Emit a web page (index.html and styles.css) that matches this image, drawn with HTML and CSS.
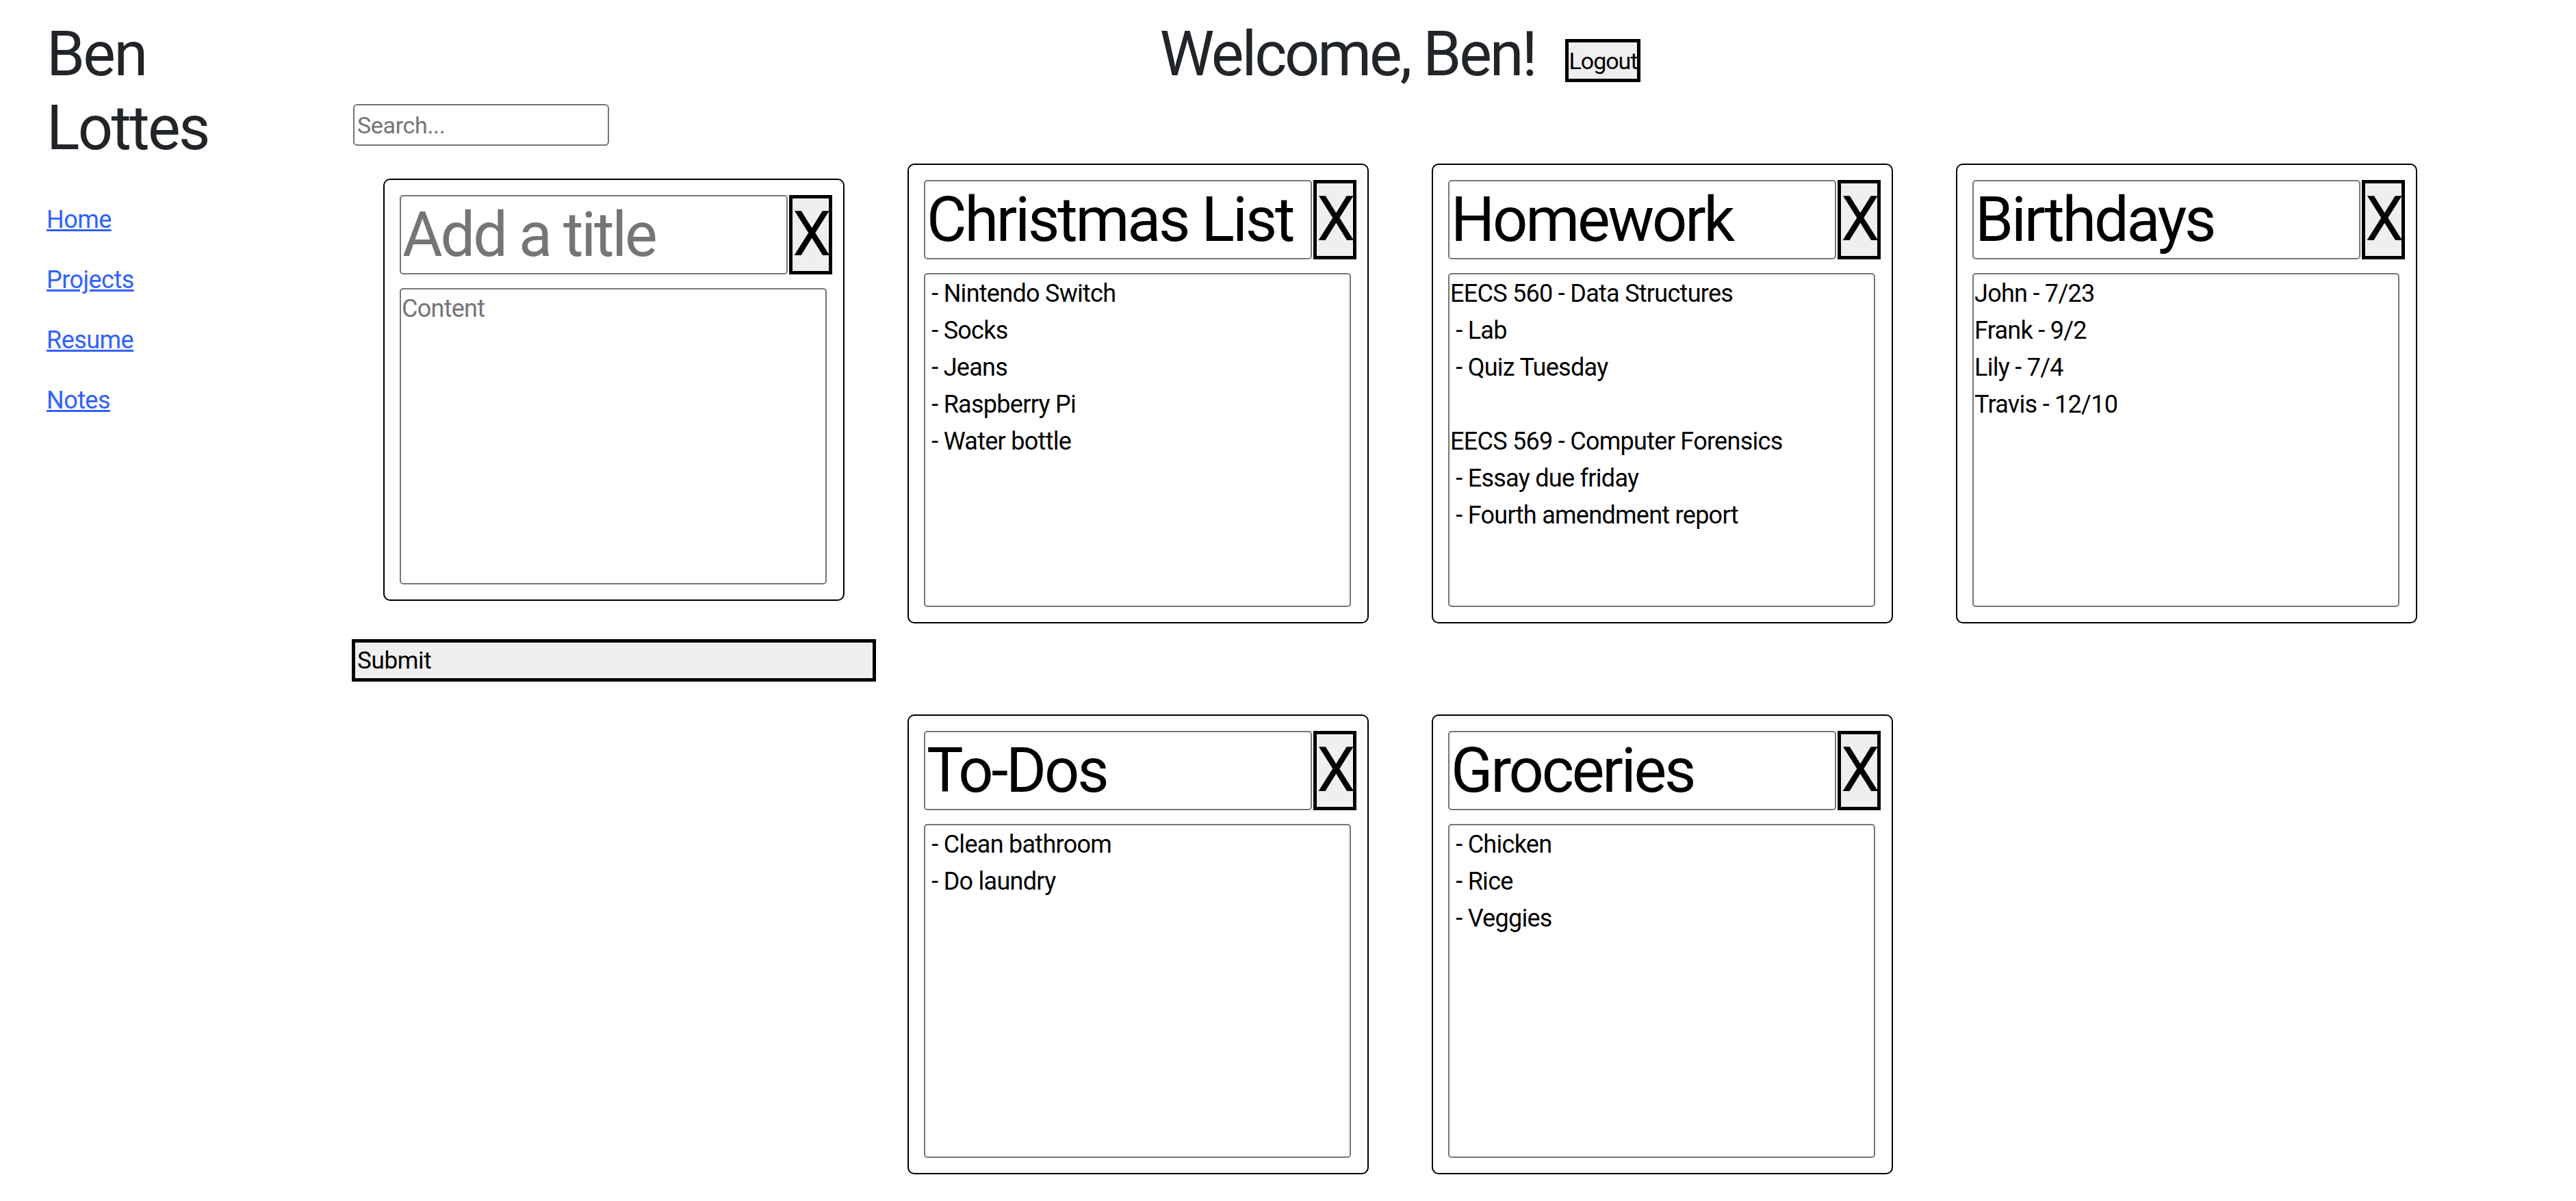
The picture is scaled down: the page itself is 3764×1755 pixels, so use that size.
FILE: index.html
```html
<!DOCTYPE html>
<html lang="en">
<head>
<meta charset="utf-8">
<title>Notes</title>
<link rel="stylesheet" href="styles.css">
</head>
<body>
<div class="page">
  <aside class="sidebar">
    <h1 class="brand">Ben Lottes</h1>
    <nav class="nav">
      <a href="#">Home</a>
      <a href="#">Projects</a>
      <a href="#">Resume</a>
      <a href="#">Notes</a>
    </nav>
  </aside>
  <main class="main">
    <div class="header">
      <h1 class="welcome">Welcome, Ben!</h1>
      <button class="logout">Logout</button>
    </div>
    <input class="search" type="text" placeholder="Search...">
    <div class="notes">
      <form class="add-form">
        <div class="card card-new">
          <div class="title-row">
            <input class="title" type="text" placeholder="Add a title">
            <button class="close" type="button">X</button>
          </div>
          <textarea class="content" placeholder="Content"></textarea>
        </div>
        <button class="submit" type="button">Submit</button>
      </form>
      <div class="card">
        <div class="title-row">
          <input class="title" type="text" value="Christmas List">
          <button class="close" type="button">X</button>
        </div>
        <textarea class="content">
 - Nintendo Switch
 - Socks
 - Jeans
 - Raspberry Pi
 - Water bottle</textarea>
      </div>
      <div class="card">
        <div class="title-row">
          <input class="title" type="text" value="Homework">
          <button class="close" type="button">X</button>
        </div>
        <textarea class="content">
EECS 560 - Data Structures
 - Lab
 - Quiz Tuesday

EECS 569 - Computer Forensics
 - Essay due friday
 - Fourth amendment report</textarea>
      </div>
      <div class="card">
        <div class="title-row">
          <input class="title" type="text" value="Birthdays">
          <button class="close" type="button">X</button>
        </div>
        <textarea class="content">
John - 7/23
Frank - 9/2
Lily - 7/4
Travis - 12/10</textarea>
      </div>
      <div class="card">
        <div class="title-row">
          <input class="title" type="text" value="To-Dos">
          <button class="close" type="button">X</button>
        </div>
        <textarea class="content">
 - Clean bathroom
 - Do laundry</textarea>
      </div>
      <div class="card">
        <div class="title-row">
          <input class="title" type="text" value="Groceries">
          <button class="close" type="button">X</button>
        </div>
        <textarea class="content">
 - Chicken
 - Rice
 - Veggies</textarea>
      </div>
    </div>
  </main>
</div>
</body>
</html>
```
FILE: styles.css
```css
html, body {
  margin: 0;
  padding: 0;
  background: #fff;
}
body {
  font-family: Roboto, "Liberation Sans", sans-serif;
  color: #212529;
}
.page {
  display: flex;
  width: 3764px;
}
.sidebar {
  width: 514px;
  flex: none;
  box-sizing: border-box;
  padding: 26px 130px 0 68px;
}
.brand {
  margin: 0;
  font-size: 90px;
  line-height: 108px;
  font-weight: 400;
  letter-spacing: -0.03em;
}
.nav {
  display: flex;
  flex-direction: column;
  align-items: flex-start;
  gap: 34px;
  margin-top: 52px;
}
.nav a {
  font-size: 36px;
  line-height: 54px;
  color: #2f62fc;
  text-decoration: underline;
  letter-spacing: -0.015em;
}
.main {
  width: 3064px;
  flex: none;
  padding-top: 26px;
}
.header {
  display: flex;
  justify-content: center;
  align-items: flex-start;
}
.welcome {
  margin: 0 44px 0 0;
  font-size: 90px;
  line-height: 108px;
  font-weight: 400;
  letter-spacing: -0.035em;
}
.logout {
  margin-top: 31px;
  width: 110px;
  height: 63px;
  box-sizing: border-box;
  padding: 0;
  border: 5px solid #000;
  background: #efefef;
  color: #000;
  font-family: Roboto, "Liberation Sans", sans-serif;
  font-size: 34px;
  letter-spacing: -0.03em;
}
.search {
  display: block;
  margin: 18px 0 0 2px;
  width: 374px;
  height: 61px;
  box-sizing: border-box;
  padding: 0 4px;
  border: 2px solid #767676;
  border-radius: 6px;
  font-family: Roboto, "Liberation Sans", sans-serif;
  font-size: 34px;
  color: #000;
  letter-spacing: -0.01em;
}
::placeholder {
  color: #757575;
  opacity: 1;
}
.notes {
  display: flex;
  flex-wrap: wrap;
  justify-content: center;
  align-items: flex-start;
  margin-top: 2px;
}
.add-form {
  width: 766px;
  margin: 0 0 24px 0;
}
.card {
  width: 674px;
  box-sizing: border-box;
  margin: 24px 46px;
  padding: 22px;
  border: 2px solid #000;
  border-radius: 10px;
}
.card-new {
  margin: 46px 46px 0;
}
.title-row {
  display: flex;
  gap: 2px;
}
.title {
  flex: none;
  width: 567px;
  height: 116px;
  box-sizing: border-box;
  padding: 0 2px;
  border: 2px solid #767676;
  border-radius: 5px;
  font-family: Roboto, "Liberation Sans", sans-serif;
  font-size: 90px;
  color: #000;
  letter-spacing: -0.035em;
}
.close {
  flex: none;
  width: 63px;
  height: 116px;
  box-sizing: border-box;
  padding: 0;
  border: 5px solid #000;
  background: #efefef;
  color: #000;
  font-family: Roboto, "Liberation Sans", sans-serif;
  font-size: 90px;
  line-height: 1;
}
.content {
  display: block;
  width: 624px;
  height: 488px;
  margin-top: 20px;
  box-sizing: border-box;
  padding: 1px;
  border: 2px solid #767676;
  border-radius: 5px;
  font-family: Roboto, "Liberation Sans", sans-serif;
  font-size: 36px;
  line-height: 54px;
  color: #000;
  letter-spacing: -0.02em;
  resize: none;
  overflow: hidden;
}
.card-new .content {
  height: 433px;
}
.submit {
  display: block;
  width: 766px;
  height: 62px;
  margin-top: 56px;
  box-sizing: border-box;
  padding: 0 3px;
  border: 5px solid #000;
  background: #efefef;
  color: #000;
  text-align: left;
  font-family: Roboto, "Liberation Sans", sans-serif;
  font-size: 35px;
  letter-spacing: -0.01em;
}
```
